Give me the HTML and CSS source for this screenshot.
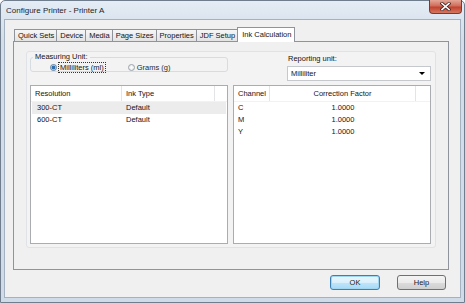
FILE: index.html
```html
<!DOCTYPE html>
<html>
<head>
<meta charset="utf-8">
<title>Configure Printer - Printer A</title>
<link rel="stylesheet" href="styles.css">
</head>
<body>
<div class="window">
    <div class="titlebar">
        <span class="title">Configure Printer - Printer A</span>
        <span class="close">
            <svg width="11" height="9" viewBox="0 0 11 9">
                <path d="M2 1.5 L9 7.5 M9 1.5 L2 7.5" stroke="#4a2a2a" stroke-width="3.2" stroke-linecap="square"/>
                <path d="M2 1.5 L9 7.5 M9 1.5 L2 7.5" stroke="#ffffff" stroke-width="1.6" stroke-linecap="square"/>
            </svg>
        </span>
    </div>
    <div class="client">
        <div class="tabs">
            <div class="tab">Quick Sets</div>
            <div class="tab">Device</div>
            <div class="tab">Media</div>
            <div class="tab">Page Sizes</div>
            <div class="tab">Properties</div>
            <div class="tab">JDF Setup</div>
            <div class="tab active">Ink Calculation</div>
        </div>
        <div class="panel">
            <div class="group">
                <div class="top-row">
                    <fieldset class="units">
                        <legend>Measuring Unit:</legend>
                        <div class="radios">
                            <label class="radio"><span class="dot checked"></span><span class="focus">Milliliters (ml)</span></label>
                            <label class="radio grams"><span class="dot"></span>Grams (g)</label>
                        </div>
                    </fieldset>
                    <div class="reporting">
                        <div class="rep-label">Reporting unit:</div>
                        <div class="combo"><span>Milliliter</span><span class="arrow"></span></div>
                    </div>
                </div>
                <div class="lists">
                    <div class="list">
                        <div class="list-head">
                            <div class="col res">Resolution</div>
                            <div class="col type">Ink Type</div>
                            <div class="col fill"></div>
                        </div>
                        <div class="row selected"><div class="cell res">300-CT</div><div class="cell type">Default</div></div>
                        <div class="row"><div class="cell res">600-CT</div><div class="cell type">Default</div></div>
                    </div>
                    <div class="list">
                        <div class="list-head">
                            <div class="col chan">Channel</div>
                            <div class="col factor">Correction Factor</div>
                            <div class="col fill"></div>
                        </div>
                        <div class="row"><div class="cell chan">C</div><div class="cell factor">1.0000</div></div>
                        <div class="row"><div class="cell chan">M</div><div class="cell factor">1.0000</div></div>
                        <div class="row"><div class="cell chan">Y</div><div class="cell factor">1.0000</div></div>
                    </div>
                </div>
            </div>
        </div>
        <div class="buttons">
            <button type="button" class="btn default">OK</button>
            <button type="button" class="btn">Help</button>
        </div>
    </div>
</div>
</body>
</html>
```

FILE: styles.css
```css
body {
    margin: 0;
    font-family: "Liberation Sans", Arial, sans-serif;
    font-size: 7.5px;
    color: #141414;
    background: #ffffff;
}
.window {
    box-sizing: border-box;
    width: 465px;
    height: 303px;
    border: 1px solid #6f7d8d;
    border-radius: 5px 5px 0 0;
    background: linear-gradient(#e4ecf5, #d3dee9 40px, #cfdbe8);
    display: flex;
    flex-direction: column;
}
.titlebar {
    height: 18px;
    display: flex;
    align-items: flex-start;
    padding-left: 5px;
}
.title {
    font-size: 8px;
    line-height: 19px;
    color: #1e1e1e;
}
.close {
    margin-left: auto;
    margin-right: 2px;
    margin-top: -1px;
    width: 33px;
    height: 14px;
    box-sizing: border-box;
    border: 1px solid #7b3a31;
    border-top: none;
    border-radius: 0 0 4px 4px;
    background: linear-gradient(#e5a696, #cf6e5c 45%, #c2432f 55%, #d4775f);
    display: flex;
    align-items: center;
    justify-content: center;
}
.client {
    flex: 1;
    margin: 0 3px 4px 3px;
    border: 1px solid #a3b1c1;
    background: #f0f0f0;
    display: flex;
    flex-direction: column;
}
.tabs {
    display: flex;
    align-items: flex-end;
    height: 15px;
    margin: 7px 0 -1px 9px;
}
.tab {
    height: 13px;
    box-sizing: border-box;
    line-height: 12px;
    padding: 0 2px 0 3px;
    border: 1px solid #8f949c;
    border-left: none;
    background: linear-gradient(#f6f6f6, #e3e3e3);
    white-space: nowrap;
}
.tab:first-child {
    border-left: 1px solid #8f949c;
}
.tab.active {
    height: 15px;
    line-height: 13px;
    padding: 0 3px 0 4px;
    margin-left: -1px;
    border-left: 1px solid #8f949c;
    border-bottom: none;
    background: #ffffff;
    position: relative;
    z-index: 1;
}
.panel {
    height: 229px;
    box-sizing: border-box;
    margin: 0 11px 0 8px;
    border: 1px solid #8f949c;
    background: #f0f0f0;
    padding: 9px 12px 0 12px;
}
.group {
    height: 197px;
    box-sizing: border-box;
    border: 1px solid #dfe3e7;
    border-radius: 3px;
    background: #f3f3f3;
    padding: 1px 4px 3px 3px;
    display: flex;
    flex-direction: column;
}
.top-row {
    height: 32px;
    display: flex;
    justify-content: space-between;
}
.units {
    width: 198px;
    height: 19px;
    box-sizing: border-box;
    margin: 0;
    padding: 0;
    border: 1px solid #d5dce2;
    border-radius: 3px;
}
.units legend {
    padding: 0 2px;
    margin-left: 2px;
    line-height: 8px;
}
.radios {
    display: flex;
    padding-left: 19px;
    margin-top: 1px;
    line-height: 9px;
}
.radio {
    display: flex;
    align-items: center;
}
.radio.grams {
    margin-left: 22px;
    color: #2a2a2a;
}
.dot {
    width: 7px;
    height: 7px;
    box-sizing: border-box;
    border-radius: 50%;
    border: 1px solid #9aa3ac;
    background: radial-gradient(#ffffff, #dfe3e8);
    margin-right: 2px;
    position: relative;
}
.dot.checked {
    border-color: #5e7e9c;
    background: radial-gradient(#2f6fae 1.6px, #c9dcee 2.2px, #eef3f8);
}
.focus {
    border: 1px dotted #333333;
    padding: 0 1px;
    line-height: 9px;
    margin-left: -1px;
}
.reporting {
    width: 144px;
    padding-top: 1px;
}
.rep-label {
    line-height: 9px;
    padding-left: 1px;
}
.combo {
    margin-top: 3px;
    height: 15px;
    box-sizing: border-box;
    border: 1px solid #c5c9ce;
    background: #ffffff;
    display: flex;
    align-items: center;
    padding-left: 3px;
}
.arrow {
    margin-left: auto;
    margin-right: 5px;
    width: 0;
    height: 0;
    border-left: 3px solid transparent;
    border-right: 3px solid transparent;
    border-top: 3px solid #000000;
}
.lists {
    display: flex;
    gap: 5px;
    height: 159px;
}
.list {
    width: 198px;
    box-sizing: border-box;
    border: 1px solid #a9acb1;
    background: #ffffff;
}
.list-head {
    display: flex;
    height: 16px;
    line-height: 16px;
    border-bottom: 1px solid #f2f2f2;
    box-sizing: border-box;
}
.col {
    box-sizing: border-box;
    padding-left: 4px;
    border-right: 1px solid #e2e4e7;
    height: 15px;
}
.col.fill {
    border-right: none;
    flex: 1;
}
.col.res, .cell.res {
    width: 91px;
}
.col.type, .cell.type {
    width: 93px;
}
.col.chan, .cell.chan {
    width: 36px;
}
.col.factor, .cell.factor {
    width: 146px;
    text-align: center;
    padding-left: 0;
}
.row {
    display: flex;
    height: 12px;
    line-height: 12px;
    margin: 0 1px;
}
.row.selected {
    background: #ececec;
}
.cell {
    box-sizing: border-box;
    padding-left: 4px;
}
.cell.res {
    padding-left: 5px;
    width: 90px;
}
.cell.chan {
    width: 35px;
    padding-left: 3px;
}
.buttons {
    display: flex;
    justify-content: flex-end;
    gap: 17px;
    margin-top: 5px;
    padding-right: 14px;
}
.btn {
    width: 49px;
    height: 15px;
    box-sizing: border-box;
    border: 1px solid #707070;
    border-radius: 3px;
    background: linear-gradient(#f4f4f4, #ebebeb 50%, #dcdcdc 51%, #cfcfcf);
    font-family: "Liberation Sans", Arial, sans-serif;
    font-size: 7.5px;
    color: #1b1b1b;
    padding: 0;
}
.btn.default {
    width: 50px;
    border-color: #3c7fb1;
    box-shadow: inset 0 0 0 1px #9fd6f2;
    background: linear-gradient(#eaf6fd, #d9f0fc 50%, #bee6fd 51%, #a7d9f5);
}
```
